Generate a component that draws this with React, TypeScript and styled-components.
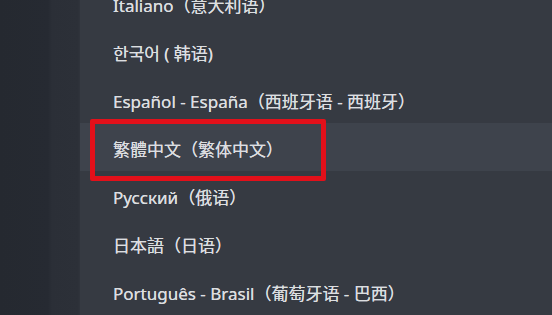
import React from 'react'
import styled, { createGlobalStyle } from 'styled-components'

const GlobalStyle = createGlobalStyle`
  html, body {
    margin: 0;
    padding: 0;
    background: #262a32;
  }
  * {
    box-sizing: border-box;
  }
`

const Page = styled.div`
  width: 552px;
  height: 315px;
  display: flex;
  overflow: hidden;
  font-family: "Noto Sans", "Noto Sans CJK SC", sans-serif;
`

const Sidebar = styled.div`
  width: 80px;
  flex-shrink: 0;
  background: linear-gradient(to right, #252930 0px, #262a32 48px, #2b2f37 52px, #2c3038 78px, #30343c 80px);
`

const Panel = styled.div`
  flex: 1;
  background: #363a42;
  overflow: hidden;
`

const List = styled.ul`
  list-style: none;
  margin: -21px 0 0 0;
  padding: 0;
`

const Row = styled.li<{ $active?: boolean }>`
  position: relative;
  height: 48px;
  display: flex;
  align-items: center;
  padding-left: 33px;
  padding-top: 2px;
  font-size: 17px;
  color: #dcdee0;
  text-shadow: 0 0 0.4px #dcdee0;
  background: ${(p) => (p.$active ? '#3e434c' : 'transparent')};
  white-space: nowrap;
`

const Highlight = styled.div`
  position: absolute;
  left: 10px;
  top: -4px;
  width: 236px;
  height: 62px;
  border: 5px solid #e3101a;
  border-radius: 2px;
  pointer-events: none;
`

const languages = [
  'Italiano（意大利语）',
  '한국어 ( 韩语)',
  'Español - España（西班牙语 - 西班牙）',
  '繁體中文（繁体中文）',
  'Русский（俄语）',
  '日本語（日语）',
  'Português - Brasil（葡萄牙语 - 巴西）',
]

const App: React.FC = () => {
  return (
    <>
      <GlobalStyle />
      <Page>
        <Sidebar />
        <Panel>
          <List>
            {languages.map((lang, i) => (
              <Row key={lang} $active={i === 3}>
                {lang}
                {i === 3 && <Highlight />}
              </Row>
            ))}
          </List>
        </Panel>
      </Page>
    </>
  )
}

export default App
